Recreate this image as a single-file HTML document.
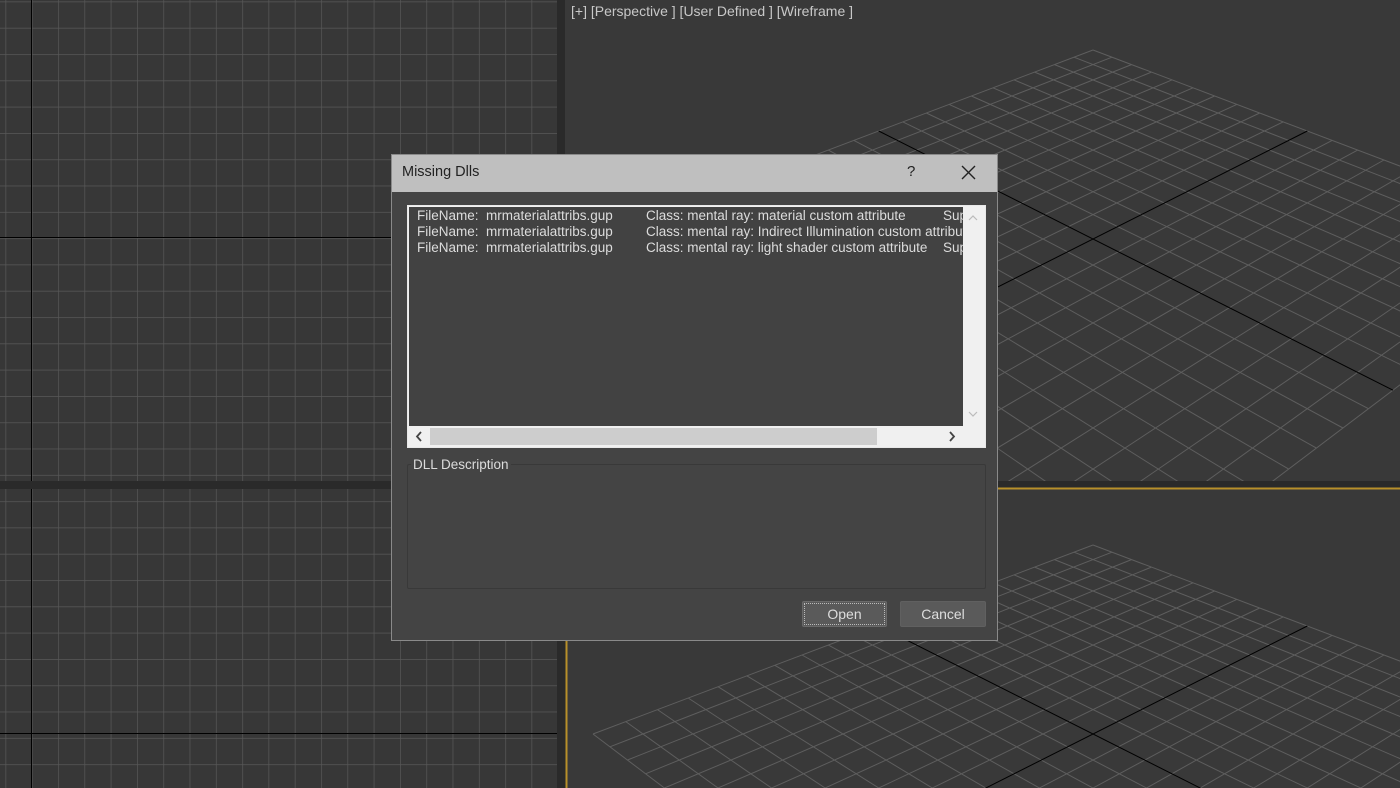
<!DOCTYPE html>
<html style="overflow:hidden;width:1400px;height:788px"><head><meta charset="utf-8"><style>
body{margin:0;width:1400px;height:788px;overflow:hidden;background:#2a2a2a;font-family:"Liberation Sans",sans-serif;position:relative}
.abs{position:absolute}
.txt{color:#dcdcdc;font-size:13.5px;white-space:pre}
</style></head><body>
<svg class="abs" style="left:0;top:0" width="1400" height="788">
<defs>
<pattern id="g" x="5.5" y="1.5" width="26.3" height="26.3" patternUnits="userSpaceOnUse">
<path d="M0 0H26.3M0 0V26.3" stroke="#585858" stroke-width="1.4" fill="none"/>
</pattern>
<clipPath id="tr"><rect x="565" y="0" width="835" height="481"/></clipPath>
<clipPath id="br"><rect x="567" y="490" width="833" height="298"/></clipPath>
<g id="grid">
<path id="half" fill="none" stroke="#5e5e5e" d="M1093 50L593 239M1112 57.2L609.9 251.8M1131.5 64.6L627.5 265M1151.4 72.1L645.6 278.8M1171.9 79.9L664.4 293M1193 87.8L683.9 307.7M1214.6 96L704.1 323M1236.8 104.4L725.1 338.8M1259.7 113L746.8 355.3M1283.1 121.9L769.5 372.4M1332.1 140.4L817.5 408.7M1357.7 150.1L843 428M1384 160L869.6 448.1M1411.2 170.3L897.3 469.1M1439.2 180.8L926.3 491M1468 191.7L956.6 513.9M1497.8 203L988.3 537.9M1528.5 214.6L1021.6 563M1560.2 226.6L1056.4 589.3M1593 239L1093 617"/>
<use href="#half" transform="matrix(-1,0,0,1,2186,0)"/>
<path fill="none" stroke="#000" d="M1307.3 131L793 390.2M878.7 131L1393 390.2"/>
</g>
</defs>
<rect x="0" y="0" width="557" height="481" fill="#373737"/>
<rect x="0" y="0" width="557" height="481" fill="url(#g)"/>
<line x1="31.5" y1="0" x2="31.5" y2="481" stroke="#000"/>
<line x1="0" y1="237.5" x2="557" y2="237.5" stroke="#000"/>
<rect x="0" y="489" width="557" height="299" fill="#373737"/>
<rect x="0" y="489" width="557" height="299" fill="url(#g)"/>
<line x1="31.5" y1="489" x2="31.5" y2="788" stroke="#000"/>
<line x1="0" y1="733.5" x2="557" y2="733.5" stroke="#000"/>
<rect x="565" y="0" width="835" height="481" fill="#393939"/>
<rect x="566" y="488" width="834" height="300" fill="#393939"/>
<g clip-path="url(#tr)"><use href="#grid"/></g>
<g clip-path="url(#br)"><use href="#grid" transform="translate(0,495)"/></g>
<line x1="566" y1="488.5" x2="1400" y2="488.5" stroke="#b8902a" stroke-width="2"/>
<line x1="566.5" y1="488" x2="566.5" y2="788" stroke="#b8902a" stroke-width="2"/>
</svg>
<div class="abs txt" style="left:571px;top:3px;color:#c8c8c8;font-size:14px">[+] [Perspective ] [User Defined ] [Wireframe ]</div>

<div class="abs" style="left:391px;top:154px;width:605px;height:485px;border:1px solid #8a8a8a;background:#444"></div>
<div class="abs" style="left:392px;top:155px;width:605px;height:37px;background:#bfbfbf"></div>
<div class="abs" style="left:402px;top:164px;font-size:14.5px;color:#222">Missing Dlls</div>
<div class="abs" style="left:907px;top:163px;font-size:15px;color:#222">?</div>
<svg class="abs" style="left:961px;top:165px" width="15" height="15"><path d="M1 1L14 14M14 1L1 14" stroke="#222" stroke-width="1.4"/></svg>

<div class="abs" style="left:407px;top:205px;width:577px;height:241px;border:1px solid #e8e8e8;background:#f0f0f0"></div>
<div class="abs" style="left:409px;top:207px;width:554px;height:219px;background:#424242;overflow:hidden">
<div class="abs txt" style="left:8px;top:1px;line-height:16px">FileName:  mrmaterialattribs.gup
FileName:  mrmaterialattribs.gup
FileName:  mrmaterialattribs.gup</div>
<div class="abs txt" style="left:237px;top:1px;line-height:16px">Class: mental ray: material custom attribute
Class: mental ray: Indirect Illumination custom attribute
Class: mental ray: light shader custom attribute</div>
<div class="abs txt" style="left:534px;top:1px;line-height:16px">Sup

Sup</div>
</div>
<svg class="abs" style="left:963px;top:207px" width="22" height="219"><path d="M6 13L10 9L14 13M6 205L10 209L14 205" stroke="#bbb" stroke-width="1.2" fill="none"/></svg>
<div class="abs" style="left:430px;top:428px;width:447px;height:17px;background:#cdcdcd"></div>
<svg class="abs" style="left:409px;top:427px" width="576" height="19"><path d="M12 5L8 9.5L12 14M541 5L545 9.5L541 14" stroke="#444" stroke-width="1.8" fill="none"/></svg>

<div class="abs" style="left:407px;top:464px;width:577px;height:123px;border:1px solid #393939;border-radius:2px"></div>
<div class="abs" style="left:411px;top:457px;background:#444;padding:0 2px;color:#dcdcdc;font-size:13.5px">DLL Description</div>

<div class="abs" style="left:802px;top:601px;width:83px;height:24px;background:#5a5a5a;border:1px solid #6a6a6a;border-radius:2px;outline:1px dotted #bbb;outline-offset:-3px;color:#ddd;font-size:14px;text-align:center;line-height:24px">Open</div>
<div class="abs" style="left:900px;top:601px;width:84px;height:24px;background:#5a5a5a;border:1px solid #606060;border-radius:2px;color:#ddd;font-size:14px;text-align:center;line-height:24px">Cancel</div>
</body></html>
